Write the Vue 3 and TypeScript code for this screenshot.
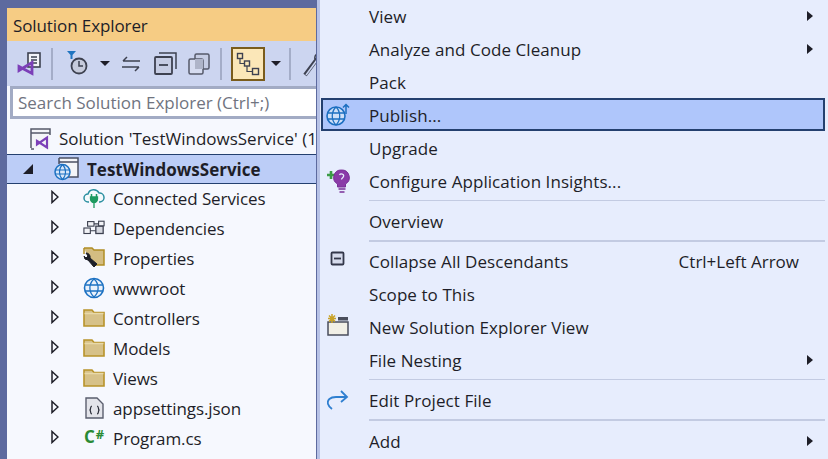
<script setup lang="ts">
type TreeRow = { label: string; icon: string };
type MenuRow = { label?: string; sep?: boolean; thick?: boolean; tall?: boolean; arrow?: boolean; shortcut?: string; icon?: string; active?: boolean };

const tree: TreeRow[] = [
  { label: "Connected Services", icon: "cloud" },
  { label: "Dependencies", icon: "deps" },
  { label: "Properties", icon: "props" },
  { label: "wwwroot", icon: "globe" },
  { label: "Controllers", icon: "folder" },
  { label: "Models", icon: "folder" },
  { label: "Views", icon: "folder" },
  { label: "appsettings.json", icon: "json" },
  { label: "Program.cs", icon: "cs" },
];

const menu: MenuRow[] = [
  { label: "View", arrow: true },
  { label: "Analyze and Code Cleanup", arrow: true },
  { label: "Pack" },
  { label: "Publish...", icon: "publish", active: true },
  { label: "Upgrade" },
  { label: "Configure Application Insights...", icon: "insights" },
  { sep: true },
  { label: "Overview" },
  { sep: true, thick: true },
  { label: "Collapse All Descendants", icon: "collapse", shortcut: "Ctrl+Left Arrow" },
  { label: "Scope to This" },
  { label: "New Solution Explorer View", icon: "newview" },
  { label: "File Nesting", arrow: true },
  { sep: true },
  { label: "Edit Project File", icon: "edit" },
  { sep: true, thick: true, tall: true },
  { label: "Add", arrow: true },
];
</script>

<template>
  <div class="screen">
    <section class="panel">
      <header class="title">Solution Explorer</header>
      <div class="toolbar">
        <svg class="tool vs" width="24" height="26" viewBox="0 0 24 26">
          <rect x="11" y="2" width="12" height="14" fill="#f3f4f8" stroke="#3d4150" stroke-width="1.6"/>
          <path d="M14 6h6M14 9h6M14 12h6" stroke="#3d4150" stroke-width="1.4"/>
          <path d="M2 15.500L15 22.500V11.500L2 19.500z" fill="none" stroke="#7c3fb8" stroke-width="2.800"/>
        </svg>
        <i class="div"></i>
        <svg class="tool" width="24" height="26" viewBox="0 0 24 26">
          <path d="M1 0h9l-3.500 4v4h-2V4z" fill="#1f74c0"/>
          <circle cx="13" cy="15" r="7.500" fill="#c6cbdc" stroke="#3d4150" stroke-width="1.800"/>
          <path d="M13 10v5h4" fill="none" stroke="#3d4150" stroke-width="1.500"/>
        </svg>
        <i class="caret c1"></i>
        <svg class="tool sync" width="20" height="16" viewBox="0 0 20 16">
          <path d="M19 5H2M6 1L2 5M1 11h17M14 15l4-4" fill="none" stroke="#3d4150" stroke-width="1.500"/>
        </svg>
        <svg class="tool col" width="23" height="23" viewBox="0 0 23 23">
          <path d="M5 1h17v16" fill="none" stroke="#3d4150" stroke-width="1.500"/>
          <rect x="1" y="5" width="17" height="17" rx="1" fill="#c6cde4" stroke="#3d4150" stroke-width="1.800"/>
          <path d="M5 13h9" stroke="#3d4150" stroke-width="1.800"/>
        </svg>
        <svg class="tool copy" width="22" height="22" viewBox="0 0 22 22">
          <rect x="7" y="1" width="14" height="15" rx="1.500" fill="#c6cde4" stroke="#55596a" stroke-width="1.500"/>
          <rect x="1" y="6" width="14" height="15" rx="1.500" fill="#d6dcf0" stroke="#55596a" stroke-width="1.500"/>
          <rect x="7" y="6" width="8" height="10" fill="#aeb4c8"/>
        </svg>
        <i class="div d2"></i>
        <div class="toggle">
          <svg width="24" height="24" viewBox="0 0 24 24">
            <rect x="1.500" y="1.500" width="5" height="5" fill="none" stroke="#3d4150" stroke-width="1.400"/>
            <rect x="8.500" y="9" width="5" height="5" fill="none" stroke="#3d4150" stroke-width="1.400"/>
            <rect x="16.500" y="16.500" width="6" height="6" fill="none" stroke="#3d4150" stroke-width="1.400"/>
            <path d="M4 6.500V11.500h4.500M11 14v5.500h5.500" fill="none" stroke="#3d4150" stroke-width="1.200"/>
          </svg>
        </div>
        <i class="caret c2"></i>
        <i class="div d3"></i>
        <svg class="tool" width="20" height="26" viewBox="0 0 20 26">
          <path d="M2 24L14 8" stroke="#3d4150" stroke-width="4"/>
          <path d="M3 24L14 9" stroke="#ccd5f0" stroke-width="1.500"/>
          <path d="M12 8a5 5 0 0 1 8-5" fill="none" stroke="#3d4150" stroke-width="1.500"/>
        </svg>
      </div>
      <div class="search">Search Solution Explorer (Ctrl+;)</div>
      <div class="tree">
        <div class="solution">
          <svg class="sol-icon" width="22" height="22" viewBox="0 0 22 22">
            <path d="M1 21V1h19v20" fill="#f4f5f8"/>
            <path d="M1 20V1h19v6M1 5h19M1 21h3" fill="none" stroke="#55596a" stroke-width="1.500"/>
            <path d="M7 13L17 19.500V9.500L7 16.500z" fill="none" stroke="#7c3fb8" stroke-width="2.200"/>
          </svg>
          <span class="sol-text">Solution 'TestWindowsService' (1</span>
        </div>
        <div class="project">
          <span class="expanded"></span>
          <svg class="proj-icon" width="26" height="24" viewBox="0 0 26 24">
            <path d="M5 1h19v19H14" fill="#f4f5f8" stroke="#4b5063" stroke-width="1.500"/>
            <path d="M5 7V1M5 5h19" fill="none" stroke="#4b5063" stroke-width="1.500"/>
            <circle cx="8.500" cy="15" r="7.500" fill="#d8e6f8" stroke="#1c71c2" stroke-width="1.500"/>
            <path d="M1 13h15M1 17h15M8.500 7.500c-4 4-4 11 0 15M8.500 7.500c4 4 4 11 0 15" fill="none" stroke="#1c71c2" stroke-width="1.100"/>
          </svg>
          <b>TestWindowsService</b>
        </div>
        <div v-for="row in tree" :key="row.label" class="node">
          <svg class="collapsed" width="8" height="14" viewBox="0 0 8 14">
            <path d="M1 1.500L7 7 1 12.500z" fill="#f6f8fe" stroke="#1e1e28" stroke-width="1.500"/>
          </svg>
          <span class="node-icon">
            <svg v-if="row.icon === 'cloud'" width="22" height="22" viewBox="0 0 22 22">
              <path d="M6 15H5a4 4 0 0 1 0-8 6 6 0 0 1 11-1 4.500 4.500 0 0 1 1 9h-1" fill="#f4fafc" stroke="#2a8fa0" stroke-width="1.500"/>
              <path d="M8.500 7v3M13.500 7v3" stroke="#1e9a60" stroke-width="1.500"/>
              <path d="M7.500 10h7v2a3.500 3.500 0 0 1-7 0zM11 15v6" fill="#1e9a60" stroke="#1e9a60" stroke-width="1.300"/>
            </svg>
            <svg v-else-if="row.icon === 'deps'" width="24" height="16" viewBox="0 0 24 16">
              <rect x="1" y="8" width="7" height="6" fill="#f1f2f6" stroke="#3d4150" stroke-width="1.200"/>
              <rect x="5" y="1" width="7" height="5" fill="#f1f2f6" stroke="#3d4150" stroke-width="1.200"/>
              <rect x="14" y="6" width="8" height="8" fill="#d5d8e0" stroke="#3d4150" stroke-width="1.400"/>
              <rect x="17" y="0.600" width="6" height="5" fill="#f1f2f6" stroke="#3d4150" stroke-width="1.200"/>
              <path d="M8 11h6M12 3.500h5" stroke="#3d4150" stroke-width="1.200"/>
            </svg>
            <svg v-else-if="row.icon === 'props'" width="22" height="22" viewBox="0 0 22 22">
              <path d="M1 1h8l2 2h10v15H9" fill="#d4bd82" stroke="#b08d24" stroke-width="1.500"/>
              <path d="M1 1v6" stroke="#b08d24" stroke-width="1.500"/>
              <path d="M1 9a4 4 0 0 0 4 4l6 7 3-3-7-6a4 4 0 0 0-4-5l2 3-2 2z" fill="#1d1f28" stroke="#1d1f28"/>
            </svg>
            <svg v-else-if="row.icon === 'globe'" width="22" height="22" viewBox="0 0 22 22">
              <circle cx="11" cy="11" r="9.500" fill="#e9f1fb" stroke="#1c71c2" stroke-width="1.600"/>
              <path d="M2 8h18M2 14h18M11 2c-5.500 5-5.500 13 0 18M11 2c5.500 5 5.500 13 0 18" fill="none" stroke="#1c71c2" stroke-width="1.300"/>
            </svg>
            <svg v-else-if="row.icon === 'folder'" width="22" height="18" viewBox="0 0 22 18">
              <path d="M1 1h8l2 2.500h10V17H1z" fill="#d6c189" stroke="#b8932a" stroke-width="1.600"/>
              <path d="M1.500 4.500h19" stroke="#e8d9a8" stroke-width="1.500"/>
            </svg>
            <svg v-else-if="row.icon === 'json'" width="19" height="22" viewBox="0 0 19 22">
              <path d="M1 1h11l6 6v14H1z" fill="#e3e4ea" stroke="#5a5e6e" stroke-width="1.400"/>
              <path d="M7 9c-2 0-1 3-2 4 1 1 0 4 2 4M12 9c2 0 1 3 2 4-1 1 0 4-2 4" fill="none" stroke="#2a2d38" stroke-width="1.200"/>
            </svg>
            <span v-else class="cs">C<sup>#</sup></span>
          </span>
          <span>{{ row.label }}</span>
        </div>
      </div>
    </section>

    <section class="menu">
      <template v-for="(item, i) in menu" :key="i">
        <div v-if="item.sep" class="sep" :class="{ thick: item.thick, tall: item.tall }"><i></i></div>
        <div v-else class="item" :class="{ active: item.active }">
          <span class="gutter">
            <svg v-if="item.icon === 'publish'" width="24" height="24" viewBox="0 0 24 24">
              <circle cx="10" cy="13" r="9" fill="#cfe0f8" stroke="#1c6fc0" stroke-width="1.600"/>
              <path d="M1 10h18M1 16h18M10 4c-5 5-5 13 0 18M10 4c5 5 5 13 0 18" fill="none" stroke="#1c6fc0" stroke-width="1.300"/>
              <path d="M20 11V2M17 4.500L20 1.500l3 3" fill="none" stroke="#1c6fc0" stroke-width="1.500"/>
            </svg>
            <svg v-else-if="item.icon === 'insights'" width="24" height="24" viewBox="0 0 24 24">
              <path d="M1 6h8M5 2v8" stroke="#3c9c46" stroke-width="2.600"/>
              <path d="M15.500 1a7.500 7.500 0 0 1 4 14v3h-8v-3a7.500 7.500 0 0 1 4-14z" fill="#8a3aa8" stroke="#7a2f98"/>
              <path d="M13.500 6c1-2 5-1 4 1.500-.5 1.500-2 1.500-2 3" fill="none" stroke="#e6ecfc" stroke-width="1.300"/>
              <path d="M12.500 20h7M13.500 23h5" stroke="#7a2f98" stroke-width="1.400"/>
            </svg>
            <svg v-else-if="item.icon === 'collapse'" class="up" width="16" height="16" viewBox="0 0 16 16">
              <rect x="1.500" y="1.500" width="12" height="12" rx="1" fill="#d6dbec" stroke="#33374a" stroke-width="1.800"/>
              <path d="M4 7.500h7" stroke="#33374a" stroke-width="1.800"/>
            </svg>
            <svg v-else-if="item.icon === 'newview'" class="up" width="24" height="22" viewBox="0 0 24 22">
              <path d="M2 8h20v13H2z" fill="#f1efe6" stroke="#4a4e5c" stroke-width="1.500"/>
              <path d="M12 3h10v3.500H12z" fill="#4a4e5c"/>
              <path d="M6 0v9M2 4.500h8M3 1.500l6 6M9 1.500l-6 6" stroke="#c9a227" stroke-width="1.500"/>
            </svg>
            <svg v-else-if="item.icon === 'edit'" width="22" height="20" viewBox="0 0 22 20">
              <path d="M20 7H9C3 7 0 10 1 14c.5 2 2 3.500 4 5" fill="none" stroke="#2f7fd0" stroke-width="1.800"/>
              <path d="M14 1l6 6-6 5" fill="none" stroke="#2f7fd0" stroke-width="1.800"/>
            </svg>
          </span>
          <span class="label">{{ item.label }}</span>
          <span v-if="item.shortcut" class="shortcut">{{ item.shortcut }}</span>
          <i v-if="item.arrow" class="arrow"></i>
        </div>
      </template>
    </section>
  </div>
</template>

<style>
html, body { margin: 0; padding: 0; overflow: hidden; }
</style>

<style scoped>
.screen {
  display: flex;
  width: 828px;
  height: 459px;
  overflow: hidden;
  background: #5d6a9f;
  font-family: "Open Sans", "Noto Sans", sans-serif;
  font-size: 17px;
  color: #1e1e28;
}
.panel {
  width: 309px;
  margin: 8px 0 0 7px;
  display: flex;
  flex-direction: column;
  background: #f6f8fe;
  flex: none;
}
.title {
  height: 33px;
  line-height: 35px;
  padding-left: 6px;
  background: #f6cc84;
  letter-spacing: -0.1px;
}
.toolbar {
  height: 45px;
  display: flex;
  align-items: center;
  background: #ccd5f0;
  padding-left: 10px;
  overflow: hidden;
  flex: none;
}
.tool { flex: none; }
.vs { margin-top: 1px; }
.div { width: 2px; height: 32px; background: #a4adc8; flex: none; margin-left: 10px; margin-right: 13px; }
.caret { width: 0; height: 0; border: 5px solid transparent; border-top: 5px solid #1e1e28; border-bottom: 0; flex: none; }
.c1 { margin-left: 10px; margin-right: 11px; }
.col { margin-left: 13px; }
.copy { margin-left: 11px; }
.d2 { margin-left: 10px; margin-right: 9px; }
.toggle {
  width: 34px;
  height: 34px;
  box-sizing: border-box;
  border: 2px solid #7a5c1c;
  background: #fbe7b8;
  display: flex;
  align-items: center;
  justify-content: center;
  flex: none;
}
.c2 { margin-left: 6px; }
.d3 { margin-left: 8px; margin-right: 12px; }
.search {
  height: 33px;
  box-sizing: border-box;
  margin: 0 0 0 3px;
  border: 3px solid #a2abc4;
  border-right: 0;
  background: #fff;
  color: #70747f;
  line-height: 28px;
  padding-left: 5px;
  flex: none;
  white-space: nowrap;
}
.tree {
  flex: 1;
  padding-top: 5px;
  background: #f6f8fe;
  overflow: hidden;
}
.solution {
  height: 29.500px;
  display: flex;
  align-items: center;
  padding-left: 23px;
}
.sol-icon { flex: none; margin-right: 7px; }
.sol-text { white-space: nowrap; }
.project {
  height: 30px;
  box-sizing: border-box;
  display: flex;
  align-items: center;
  background: #bccdf7;
  border-top: 1px solid #24406f;
  border-bottom: 1px solid #24406f;
}
.project b { font-weight: 700; padding-top: 2px; }
.expanded {
  width: 0; height: 0;
  margin-left: 16px;
  border-style: solid;
  border-width: 0 0 10px 10px;
  border-color: transparent transparent #1e1e28 transparent;
}
.proj-icon { margin-left: 21px; margin-right: 7px; flex: none; }
.node {
  height: 30px;
  display: flex;
  align-items: center;
  letter-spacing: -0.1px;
}
.collapsed {
  margin-left: 44px;
  margin-top: -4px;
  flex: none;
}
.node-icon {
  width: 22px;
  height: 22px;
  margin-left: 24px;
  margin-right: 8px;
  margin-top: -2px;
  display: flex;
  align-items: center;
  justify-content: center;
  flex: none;
}
.cs { color: #2a8a34; font-weight: 700; font-size: 17px; letter-spacing: 0; line-height: 1; margin-top: -2px; white-space: nowrap; }
.cs sup { font-size: 13px; line-height: 0; vertical-align: 4px; margin-left: 1px; }
.menu {
  flex: 1;
  box-sizing: border-box;
  margin-left: 1px;
  margin-top: -1px;
  height: 462px;
  background: #e7edfd;
  border-left: 3px solid #b7c2e6;
  padding-left: 1px;
  padding-right: 3px;
}
.item {
  height: 33px;
  box-sizing: border-box;
  display: flex;
  align-items: center;
  letter-spacing: 0.07px;
}
.item.active {
  background: #afc6fb;
  outline: 2px solid #24406f;
  outline-offset: -2px;
}
.gutter { width: 48px; height: 33px; padding-right: 14px; box-sizing: border-box; display: flex; align-items: center; justify-content: center; flex: none; }
.up { margin-top: -4px; }
.label { flex: 1; white-space: nowrap; padding-top: 2px; }
.shortcut { margin-right: 26px; padding-top: 2px; letter-spacing: 0; }
.arrow {
  width: 0; height: 0;
  margin-right: 12px;
  border-style: solid;
  border-width: 5px 0 5px 6px;
  border-color: transparent transparent transparent #1e1e28;
}
.sep { height: 7px; padding-left: 48px; display: flex; align-items: center; }
.sep.tall { height: 8px; }
.sep i { display: block; flex: 1; height: 1px; background: #c3cbe2; }
.sep.thick i { height: 2px; }
</style>
